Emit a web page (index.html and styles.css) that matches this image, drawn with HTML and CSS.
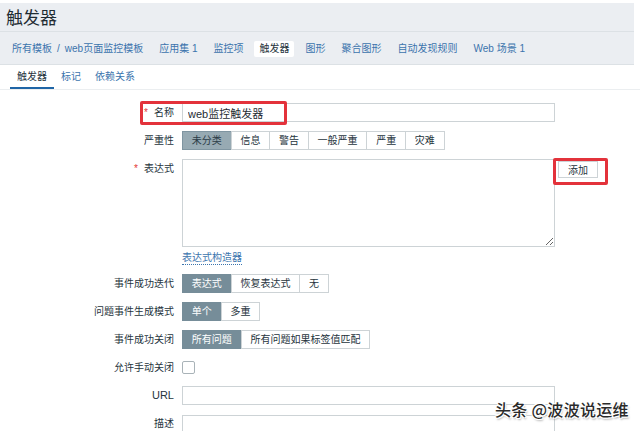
FILE: index.html
```html
<!DOCTYPE html>
<html lang="zh-CN">
<head>
<meta charset="utf-8">
<title>触发器</title>
<link rel="stylesheet" href="styles.css">
</head>
<body>
<header class="page-head">
  <h1 class="title">触发器</h1>
  <nav class="crumbs">
    <span class="crumb"><a class="link">所有模板</a><span class="sep">/</span><a class="link">web页面监控模板</a></span>
    <a class="crumb link">应用集 1</a>
    <a class="crumb link">监控项</a>
    <span class="crumb active">触发器</span>
    <a class="crumb link">图形</a>
    <a class="crumb link">聚合图形</a>
    <a class="crumb link">自动发现规则</a>
    <a class="crumb link">Web 场景 1</a>
  </nav>
</header>

<div class="tabs">
  <span class="tab tab-active">触发器</span>
  <span class="tab">标记</span>
  <span class="tab">依赖关系</span>
</div>

<main class="form">
  <label class="lbl"><span class="req">*</span>名称</label>
  <div class="ctl"><input class="text" type="text" value="web监控触发器"></div>

  <label class="lbl">严重性</label>
  <div class="ctl">
    <div class="seg">
      <span class="seg-btn sev-on">未分类</span><span class="seg-btn">信息</span><span class="seg-btn">警告</span><span class="seg-btn">一般严重</span><span class="seg-btn">严重</span><span class="seg-btn">灾难</span>
    </div>
  </div>

  <label class="lbl"><span class="req">*</span>表达式</label>
  <div class="ctl ctl-expr">
    <div class="expr-row">
      <textarea class="area"></textarea>
      <button class="btn" type="button">添加</button>
    </div>
    <a class="builder">表达式构造器</a>
  </div>

  <label class="lbl">事件成功迭代</label>
  <div class="ctl">
    <div class="seg"><span class="seg-btn on">表达式</span><span class="seg-btn">恢复表达式</span><span class="seg-btn">无</span></div>
  </div>

  <label class="lbl">问题事件生成模式</label>
  <div class="ctl">
    <div class="seg"><span class="seg-btn on">单个</span><span class="seg-btn">多重</span></div>
  </div>

  <label class="lbl">事件成功关闭</label>
  <div class="ctl">
    <div class="seg"><span class="seg-btn on">所有问题</span><span class="seg-btn">所有问题如果标签值匹配</span></div>
  </div>

  <label class="lbl">允许手动关闭</label>
  <div class="ctl"><span class="check"></span></div>

  <label class="lbl lbl-latin">URL</label>
  <div class="ctl"><input class="text" type="text"></div>

  <label class="lbl">描述</label>
  <div class="ctl"><textarea class="area area-desc"></textarea></div>

  <div class="mark mark-name"></div>
  <div class="mark mark-add"></div>
</main>

<div class="watermark">头条 @波波说运维</div>
</body>
</html>
```

FILE: styles.css
```css
* { box-sizing: border-box; }

html, body {
  margin: 0;
  padding: 0;
  background: #ffffff;
  overflow: hidden;
}

body {
  width: 640px;
  height: 431px;
  position: relative;
  font-family: "Liberation Sans", "Noto Sans CJK SC", sans-serif;
  font-size: 10px;
  color: #26343d;
}

.page-head {
  margin-top: 3px;
  width: 634px;
  background: #ebeef2;
  border-bottom: 1px solid #dce1e5;
}

.title {
  margin: 0;
  padding-left: 6px;
  height: 29px;
  line-height: 28px;
  font-size: 17px;
  font-weight: normal;
  color: #1f2c33;
  border-bottom: 1px solid #dce1e5;
  font-family: "Noto Sans CJK SC", sans-serif;
}

.crumbs {
  display: flex;
  align-items: center;
  height: 32px;
  padding-left: 7px;
  padding-top: 2px;
  gap: 6px;
}

.crumb {
  padding: 0 5px;
  line-height: 16px;
  white-space: nowrap;
}

.link { color: #3b74ad; text-decoration: none; }

.sep { color: #3b74ad; margin: 0 5px; }

.crumb.active {
  background: #ffffff;
  color: #26343d;
  border-radius: 2px;
}

.tabs {
  display: flex;
  height: 25px;
  padding-left: 10px;
  padding-top: 1px;
  border-bottom: 1px solid #ebeef0;
}

.tab {
  padding: 0 7px;
  line-height: 22px;
  color: #3b74ad;
}

.tab-active {
  color: #26343d;
  border-bottom: 2px solid #1f65a6;
}

.form {
  position: relative;
  display: grid;
  grid-template-columns: 174px 373px;
  column-gap: 8px;
  row-gap: 9px;
  padding-top: 13px;
}

.lbl {
  justify-self: end;
  line-height: 19px;
  white-space: nowrap;
  color: #26343d;
}

.lbl-latin { font-size: 11px; }

.req { color: #e33734; margin-right: 6px; }

.ctl { display: flex; align-items: center; min-height: 19px; }

.text {
  width: 373px;
  height: 19px;
  border: 1px solid #cdd3d6;
  padding: 0 5px;
  font: inherit;
  font-size: 11px;
  color: #1f2c33;
  outline: none;
}

.seg { display: flex; }

.seg-btn {
  height: 19px;
  line-height: 17px;
  padding: 0 8.8px;
  border: 1px solid #cdd3d6;
  margin-left: -1px;
  background: #ffffff;
  white-space: nowrap;
  color: #26343d;
}

.seg-btn:first-child { margin-left: 0; }

.seg-btn.on {
  background: #768d99;
  border-color: #768d99;
  color: #ffffff;
}

.seg-btn.sev-on {
  background: #97aab3;
  border-color: #7f95a1;
  color: #2b3c47;
}

.ctl-expr {
  flex-direction: column;
  align-items: flex-start;
}

.expr-row { display: flex; align-items: flex-start; }

.area {
  display: block;
  width: 373px;
  height: 88px;
  border: 1px solid #cdd3d6;
  resize: vertical;
  font: inherit;
  outline: none;
}

.area-desc { height: 17px; resize: none; border-bottom: none; }

.btn {
  margin-left: 3px;
  margin-top: 2px;
  width: 40px;
  height: 17px;
  padding: 0;
  border: 1px solid #cdd3d6;
  background: #ffffff;
  font: inherit;
  color: #26343d;
  flex: none;
}

.builder {
  margin-top: 4px;
  line-height: 13px;
  color: #3b74ad;
  border-bottom: 1px dotted #3b74ad;
}

.check {
  display: block;
  width: 13px;
  height: 13px;
  border: 1px solid #a9b3b8;
  border-radius: 2px;
  background: #fff;
}

.mark {
  position: absolute;
  border: 3px solid #e3323b;
  border-radius: 2px;
}

.mark-name { left: 140px; top: 11px; width: 147px; height: 24px; }

.mark-add { left: 553px; top: 68px; width: 55px; height: 27px; }

.watermark {
  position: absolute;
  left: 495px;
  top: 397px;
  font-family: "Noto Sans CJK SC", sans-serif;
  font-size: 16px;
  font-weight: 500;
  letter-spacing: 0.3px;
  color: #2a2a2a;
  text-shadow: 1px 1px 0 #fff, -1px -1px 0 #fff, 1px -1px 0 #fff, -1px 1px 0 #fff, 1px 2px 2px rgba(0,0,0,0.35);
  white-space: nowrap;
}
```
